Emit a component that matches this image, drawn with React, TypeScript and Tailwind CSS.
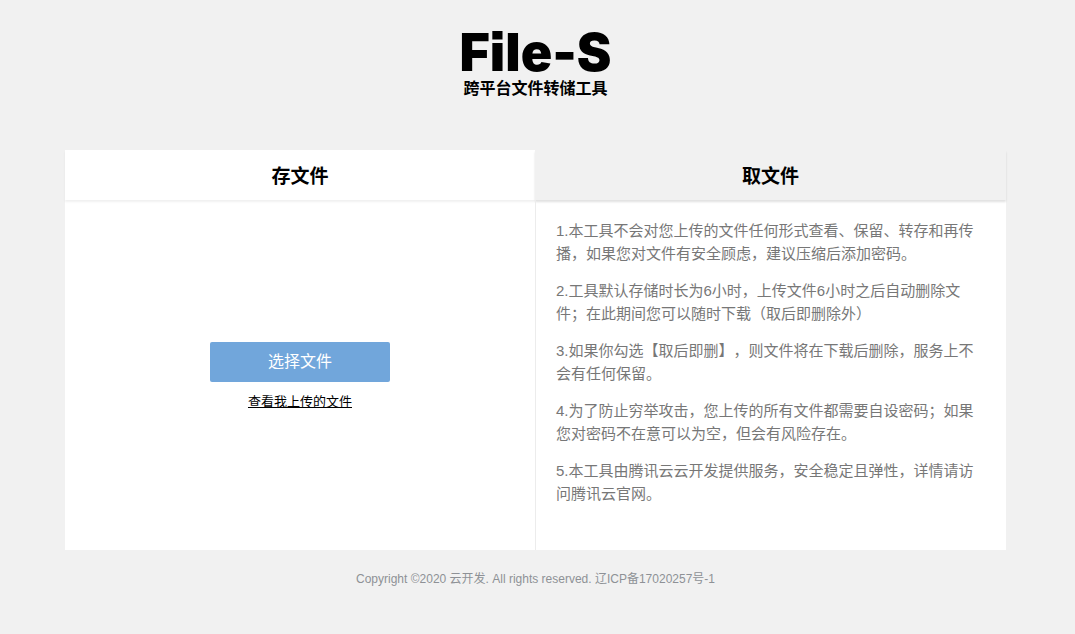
const notes: string[] = [
  '1.本工具不会对您上传的文件任何形式查看、保留、转存和再传播，如果您对文件有安全顾虑，建议压缩后添加密码。',
  '2.工具默认存储时长为6小时，上传文件6小时之后自动删除文件；在此期间您可以随时下载（取后即删除外）',
  '3.如果你勾选【取后即删】，则文件将在下载后删除，服务上不会有任何保留。',
  '4.为了防止穷举攻击，您上传的所有文件都需要自设密码；如果您对密码不在意可以为空，但会有风险存在。',
  '5.本工具由腾讯云云开发提供服务，安全稳定且弹性，详情请访问腾讯云官网。',
];

export default function App() {
  return (
    <div className="min-h-screen bg-[#f1f1f1] pr-1 font-['Liberation_Sans','Noto_Sans_CJK_SC',sans-serif] text-black">
      <header className="flex flex-col items-center pt-[26px] text-center">
        <h1 className="font-['Inter',sans-serif] text-[52px] leading-[54px] font-black [font-feature-settings:'ss07'] [font-optical-sizing:none]">
          File-S
        </h1>
        <p className="text-base leading-[18px] font-bold">跨平台文件转储工具</p>
      </header>

      <main className="mx-[65px] mt-[52px] bg-white">
        <div role="tablist" className="grid grid-cols-[470fr_471fr]">
          <button
            type="button"
            role="tab"
            aria-selected="true"
            className="h-[50px] bg-white pt-1 text-[19px] font-bold shadow-[0_2px_2px_rgba(0,0,0,0.06)]"
          >
            存文件
          </button>
          <button
            type="button"
            role="tab"
            aria-selected="false"
            className="h-[50px] bg-[#f1f1f1] pt-1 text-[19px] font-bold shadow-[0_2px_2px_rgba(0,0,0,0.12)]"
          >
            取文件
          </button>
        </div>

        <div className="grid min-h-[350px] grid-cols-[470fr_471fr]">
          <section className="flex flex-col items-center justify-center gap-2 pt-1.5">
            <button
              type="button"
              className="h-10 w-[180px] rounded-xs bg-[#71a6db] text-base text-white"
            >
              选择文件
            </button>
            <a href="#files" className="text-[13px] leading-6 underline">
              查看我上传的文件
            </a>
          </section>
          <section className="flex flex-col gap-[14px] border-l border-[#ececec] px-5 pt-[19px] text-[15px] leading-[23px] text-[#777777] [text-spacing-trim:space-all]">
            {notes.map((note) => (
              <p key={note}>{note}</p>
            ))}
          </section>
        </div>
      </main>

      <footer className="py-5 text-center text-xs leading-[18px] text-[#8e9196]">
        Copyright ©2020 云开发. All rights reserved. 辽ICP备17020257号-1
      </footer>
    </div>
  );
}
